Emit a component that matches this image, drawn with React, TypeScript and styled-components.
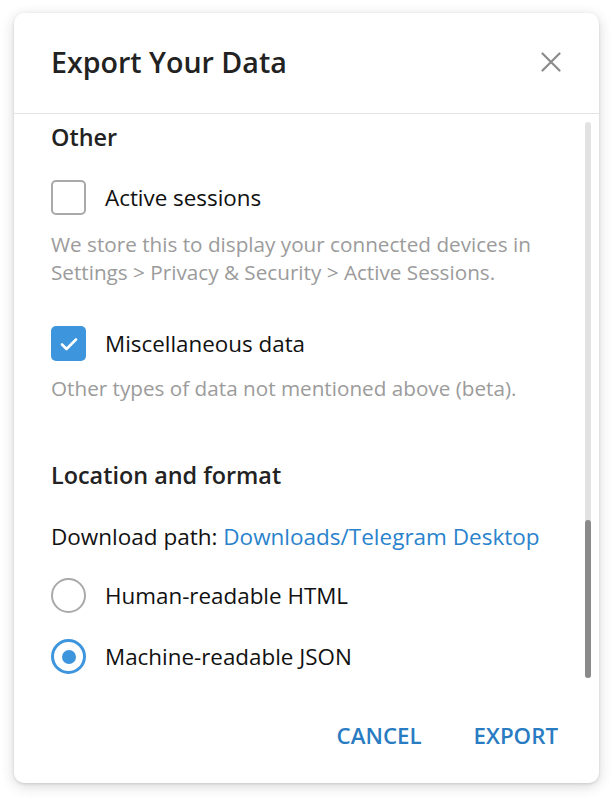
import React from "react";
import styled, { createGlobalStyle } from "styled-components";

const Global = createGlobalStyle`
  html, body {
    margin: 0;
    padding: 0;
    background: #ffffff;
  }
  body {
    font-family: "Open Sans", "Noto Sans", sans-serif;
    -webkit-font-smoothing: antialiased;
  }
`;

const Page = styled.div`
  padding: 13px 15px 17px 14px;
`;

const Dialog = styled.div`
  width: 585px;
  height: 770px;
  background: #fff;
  border-radius: 10px;
  box-shadow: 0 1px 3px rgba(0, 0, 0, 0.12), 0 3px 14px rgba(0, 0, 0, 0.16);
  display: flex;
  flex-direction: column;
  overflow: hidden;
`;

const Header = styled.div`
  height: 101px;
  box-sizing: border-box;
  flex: none;
  display: flex;
  align-items: center;
  justify-content: space-between;
  padding: 0 38px 3px 37px;
  border-bottom: 1px solid #e4e4e4;
`;

const Title = styled.h1`
  margin: 0;
  font-size: 28.6px;
  font-weight: 600;
  color: #222;
`;

const CloseButton = styled.button`
  border: 0;
  background: none;
  padding: 0;
  width: 20px;
  height: 20px;
  display: flex;
  cursor: pointer;
`;

const Body = styled.div`
  position: relative;
  flex: 1;
  overflow: hidden;
  padding: 8px 37px 0 37px;
`;

const SectionTitle = styled.div<{ $top?: number }>`
  margin-top: ${(p) => p.$top ?? 0}px;
  font-size: 23.4px;
  line-height: 30px;
  font-weight: 600;
  color: #222;
`;

const OptionRow = styled.label<{ $top: number }>`
  margin-top: ${(p) => p.$top}px;
  display: flex;
  align-items: center;
  gap: 19px;
  height: 35px;
  font-size: 22.4px;
  color: #111;
`;

const Box = styled.span<{ $checked?: boolean }>`
  flex: none;
  width: 35px;
  height: 35px;
  box-sizing: border-box;
  border-radius: 5px;
  border: ${(p) => (p.$checked ? "none" : "2px solid #a9a9a9")};
  background: ${(p) => (p.$checked ? "#3d95dd" : "#fff")};
  display: flex;
  align-items: center;
  justify-content: center;
`;

const Radio = styled.span<{ $checked?: boolean }>`
  flex: none;
  width: 35px;
  height: 35px;
  box-sizing: border-box;
  border-radius: 50%;
  border: ${(p) => (p.$checked ? "3px solid #3d95dd" : "2.5px solid #a9a9a9")};
  display: flex;
  align-items: center;
  justify-content: center;
`;

const RadioDot = styled.span`
  width: 14px;
  height: 14px;
  border-radius: 50%;
  background: #3d95dd;
`;

const Hint = styled.p<{ $top: number }>`
  margin: ${(p) => p.$top}px 0 0;
  font-size: 20.7px;
  line-height: 28px;
  color: #9b9b9b;
`;

const PathLine = styled.div<{ $top: number }>`
  margin-top: ${(p) => p.$top}px;
  font-size: 22.5px;
  line-height: 28px;
  color: #111;
`;

const PathLink = styled.a`
  color: #2a83cc;
  text-decoration: none;
`;

const ScrollTrack = styled.div`
  position: absolute;
  right: 8px;
  top: 8px;
  bottom: 12px;
  width: 6px;
  border-radius: 3px;
  background: #e2e2e2;
`;

const ScrollThumb = styled.div`
  position: absolute;
  left: 0;
  right: 0;
  bottom: 0;
  border-radius: 3px;
  background: #8a8a8a;
`;

const Footer = styled.div`
  height: 93px;
  box-sizing: border-box;
  flex: none;
  display: flex;
  align-items: center;
  justify-content: flex-end;
  gap: 52px;
  padding: 0 41px 2px 0;
`;

const TextButton = styled.button`
  border: 0;
  background: none;
  padding: 0;
  font-family: inherit;
  font-size: 22.3px;
  font-weight: 600;
  color: #2a7cc2;
  cursor: pointer;
`;

const Check = () => (
  <svg width="20" height="16" viewBox="0 0 20 16" fill="none">
    <path d="M3 8.5l4.5 4.5L17 3.5" stroke="#fff" strokeWidth="2.6" strokeLinecap="round" strokeLinejoin="round" />
  </svg>
);

const CloseIcon = () => (
  <svg width="20" height="20" viewBox="0 0 20 20" fill="none">
    <path d="M1.5 1.5l17 17M18.5 1.5l-17 17" stroke="#8b8b8b" strokeWidth="2.2" strokeLinecap="round" />
  </svg>
);

export default function App() {
  return (
    <>
      <Global />
      <Page>
        <Dialog>
          <Header>
            <Title>Export Your Data</Title>
            <CloseButton aria-label="Close">
              <CloseIcon />
            </CloseButton>
          </Header>
          <Body>
            <SectionTitle>Other</SectionTitle>
            <OptionRow $top={28}>
              <Box />
              Active sessions
            </OptionRow>
            <Hint $top={15}>
              We store this to display your connected devices in
              <br />
              Settings &gt; Privacy &amp; Security &gt; Active Sessions.
            </Hint>
            <OptionRow $top={40}>
              <Box $checked>
                <Check />
              </Box>
              Miscellaneous data
            </OptionRow>
            <Hint $top={13}>Other types of data not mentioned above (beta).</Hint>
            <SectionTitle $top={58}>Location and format</SectionTitle>
            <PathLine $top={33}>
              Download path: <PathLink href="#">Downloads/Telegram Desktop</PathLink>
            </PathLine>
            <OptionRow $top={27}>
              <Radio />
              Human-readable HTML
            </OptionRow>
            <OptionRow $top={26}>
              <Radio $checked>
                <RadioDot />
              </Radio>
              Machine-readable JSON
            </OptionRow>
            <ScrollTrack>
              <ScrollThumb style={{ height: `${(158 / 557) * 100}%` }} />
            </ScrollTrack>
          </Body>
          <Footer>
            <TextButton>CANCEL</TextButton>
            <TextButton>EXPORT</TextButton>
          </Footer>
        </Dialog>
      </Page>
    </>
  );
}
